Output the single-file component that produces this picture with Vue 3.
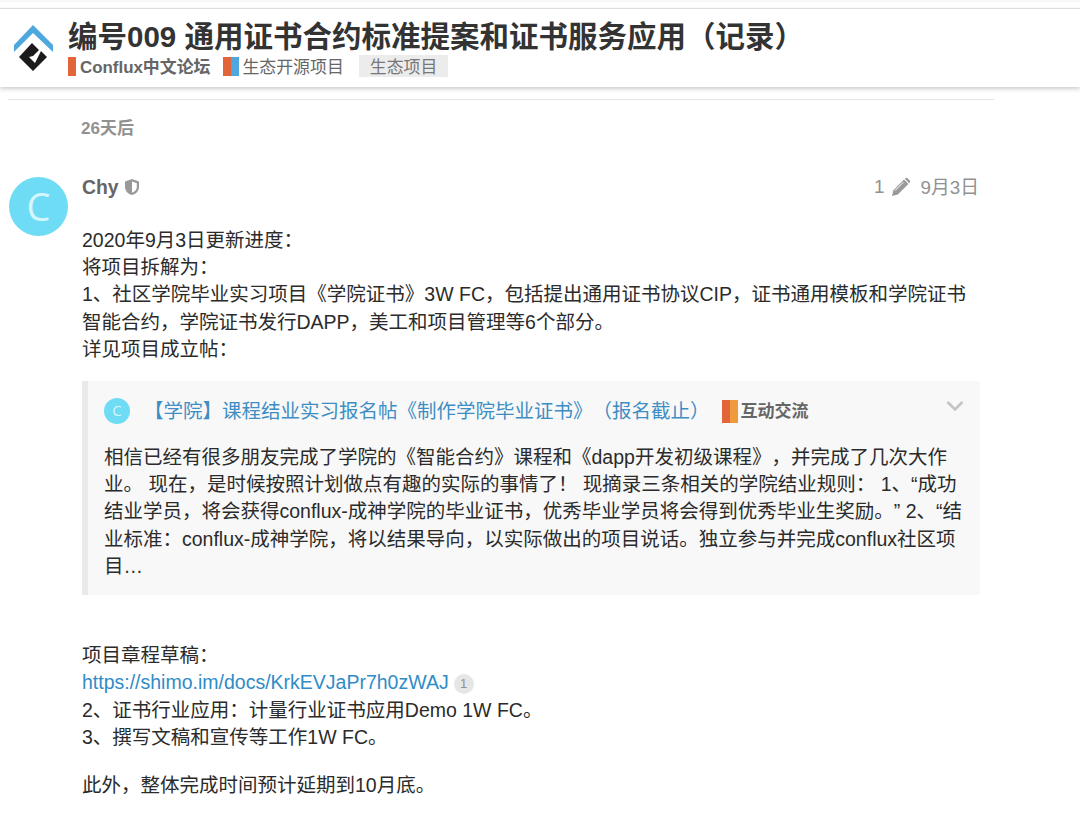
<script setup>
const quoteLines = [
  '相信已经有很多朋友完成了学院的《智能合约》课程和《dapp开发初级课程》，并完成了几次大作',
  '业。 现在，是时候按照计划做点有趣的实际的事情了！ 现摘录三条相关的学院结业规则： 1、“成功',
  '结业学员，将会获得conflux-成神学院的毕业证书，优秀毕业学员将会得到优秀毕业生奖励。” 2、“结',
  '业标准：conflux-成神学院，将以结果导向，以实际做出的项目说话。独立参与并完成conflux社区项',
  '目…',
]
</script>

<template>
  <div class="page">
    <div class="top-strip"></div>
    <header class="topic-header">
      <svg class="logo" viewBox="0 0 40 50" width="40" height="50">
        <path d="M19 0 L39 20 V27 L19 8 L0 27 V20 Z" fill="#4ea8de" />
        <path d="M18 18 L25 25 L19 31 L15 32 L21 38 L27 26 L33 32 L19 46 L5 32 Z" fill="#1c1a1a" />
      </svg>
      <div class="title-block">
        <h1>编号009 通用证书合约标准提案和证书服务应用（记录）</h1>
        <div class="crumbs">
          <span class="cat first"><i class="bar orange"></i><span class="label">Conflux中文论坛</span></span>
          <span class="cat second"><i class="bar orange"></i><i class="bar blue"></i><span class="label">生态开源项目</span></span>
          <span class="tag">生态项目</span>
        </div>
      </div>
    </header>

    <div class="rule"></div>
    <div class="gap-note">26天后</div>

    <article class="post">
      <div class="avatar">C</div>
      <div class="post-body">
        <div class="post-meta">
          <span class="username">Chy</span>
          <svg class="shield" viewBox="0 0 16 18" width="16" height="18">
            <path d="M8 1 L15 3.5 V9 C15 13 12 16 8 17 C4 16 1 13 1 9 V3.5 Z" fill="#999" />
            <path d="M8 3.5 L12.8 5.2 V9 C12.8 11.6 11 13.8 8 14.8 Z" fill="#fff" />
          </svg>
          <span class="spacer"></span>
          <span class="edits">1</span>
          <svg class="pencil" viewBox="0 0 20 20" width="20" height="20">
            <path d="M1 19 L2.4 13.2 L13 2.6 L17.4 7 L6.8 17.6 Z" fill="#999" />
            <path d="M14.2 1.4 C15 .6 16 .6 16.8 1.4 L18.6 3.2 C19.4 4 19.4 5 18.6 5.8 L18.2 6.2 L13.8 1.8 Z" fill="#999" />
            <path d="M4 13.6 L12.4 5.2" stroke="#fff" stroke-width="1" />
          </svg>
          <span class="post-date">9月3日</span>
        </div>

        <div class="cooked">
          <p>
            2020年9月3日更新进度：<br />
            将项目拆解为：<br />
            1、社区学院毕业实习项目《学院证书》3W FC，包括提出通用证书协议CIP，证书通用模板和学院证书<br />
            智能合约，学院证书发行DAPP，美工和项目管理等6个部分。<br />
            详见项目成立帖：
          </p>

          <aside class="quote">
            <div class="quote-title">
              <span class="mini-avatar">C</span>
              <a class="quote-link">【学院】课程结业实习报名帖《制作学院毕业证书》（报名截止）</a>
              <span class="cat small"><i class="bar orange"></i><i class="bar amber"></i><span class="label">互动交流</span></span>
              <svg class="chevron" viewBox="0 0 18 12" width="18" height="12">
                <path d="M1.5 2 L9 9.5 L16.5 2" fill="none" stroke="#c4c4c4" stroke-width="2.6" />
              </svg>
            </div>
            <blockquote>
              <div v-for="line in quoteLines" :key="line">{{ line }}</div>
            </blockquote>
          </aside>

          <p class="after-quote">
            项目章程草稿：<br />
            <a class="link">https://shimo.im/docs/KrkEVJaPr7h0zWAJ</a><span class="clicks">1</span><br />
            2、证书行业应用：计量行业证书应用Demo 1W FC。<br />
            3、撰写文稿和宣传等工作1W FC。
          </p>
          <p class="last">此外，整体完成时间预计延期到10月底。</p>
        </div>
      </div>
    </article>
  </div>
</template>

<style>
html, body {
  margin: 0;
  background: #fff;
}
</style>

<style scoped>
.page {
  width: 1080px;
  height: 825px;
  overflow: hidden;
  font-family: "Liberation Sans", "Noto Sans CJK SC", sans-serif;
  color: #2b2b2b;
  text-spacing-trim: space-all;
}

.top-strip {
  height: 2px;
  margin-bottom: 6px;
  background: #f6f6f6;
}
.topic-header {
  height: 79px;
  box-sizing: border-box;
  display: flex;
  align-items: flex-start;
  padding: 16px 0 0 14px;
  border-top: 1px solid #ddd;
  box-shadow: 0 2px 4px rgba(0, 0, 0, .2);
}
.logo {
  flex: none;
}
.title-block {
  margin-left: 14px;
}
h1 {
  margin: -6px 0 0;
  font-size: 29.5px;
  line-height: 36px;
  font-weight: 700;
  color: #333;
  white-space: nowrap;
}
.crumbs {
  display: flex;
  align-items: center;
  height: 22px;
  font-size: 16.9px;
  color: #666;
}
.cat {
  display: inline-flex;
  align-items: center;
  white-space: nowrap;
}
.label {
  margin-top: -2px;
}
.first {
  font-weight: 700;
  margin-right: 13px;
}
.second {
  margin-right: 15px;
}
.bar {
  display: inline-block;
  flex: none;
  width: 8px;
  height: 19px;
}
.first .bar {
  margin-right: 4px;
}
.bar + .bar {
  margin-right: 3px;
}
.orange { background: #e2653a; }
.blue { background: #4ea8de; }
.amber { background: #f09a3e; }
.tag {
  background: #ececec;
  color: #777;
  padding: 0 11px;
  height: 22px;
  line-height: 26px;
}

.rule {
  height: 1px;
  background: #e6e6e6;
  margin: 12px 86px 0 8px;
}
.gap-note {
  margin: 20px 0 0 81px;
  font-size: 17px;
  line-height: 18px;
  font-weight: 700;
  color: #919191;
}

.post {
  display: flex;
  margin-top: 35px;
  padding-left: 9px;
}
.avatar {
  flex: none;
  width: 59px;
  height: 59px;
  margin-top: 4px;
  border-radius: 50%;
  background: #6fdcf5;
  color: #d6f6fd;
  font-size: 38px;
  line-height: 59px;
  text-align: center;
  font-family: "Open Sans", sans-serif;
}
.post-body {
  width: 898px;
  margin-left: 14px;
}
.post-meta {
  display: flex;
  align-items: center;
  height: 28px;
  color: #919191;
  font-size: 18.8px;
}
.username {
  font-weight: 700;
  font-size: 19.4px;
  color: #666;
}
.shield {
  margin-left: 5px;
}
.spacer {
  flex: 1;
}
.pencil {
  margin: 0 10px 0 6px;
}
.post-date {
  margin: -4px 1px 0 0;
}

.cooked {
  margin-top: 25.5px;
  font-size: 19.5px;
  line-height: 27.4px;
}
.cooked p {
  margin: 0;
  white-space: nowrap;
}
.quote {
  margin-top: 17.5px;
  height: 214px;
  box-sizing: border-box;
  background: #f8f8f8;
  border-left: 6px solid #e9e9e9;
  padding: 0 16px;
}
.quote-title {
  display: flex;
  align-items: center;
  height: 60px;
  position: relative;
}
.mini-avatar {
  flex: none;
  width: 26px;
  height: 26px;
  border-radius: 50%;
  background: #6fdcf5;
  color: #d6f6fd;
  font-size: 15px;
  line-height: 24px;
  text-align: center;
  font-family: "Open Sans", sans-serif;
}
.quote-link {
  margin: 2px 0 0 14px;
  color: #3d8ec4;
  white-space: nowrap;
}
.cat.small {
  margin-left: 12px;
  font-size: 17px;
  color: #666;
  font-weight: 700;
}
.cat.small .bar {
  height: 23px;
}
.cat.small .label {
  margin-top: 2px;
}
.chevron {
  position: absolute;
  right: 0;
  top: 19px;
}
blockquote {
  margin: 0;
  padding-top: 2.5px;
  white-space: nowrap;
}
.after-quote {
  margin-top: 47px !important;
}
.link {
  color: #2f8cc7;
}
.clicks {
  display: inline-block;
  width: 20px;
  height: 20px;
  margin-left: 5px;
  border-radius: 50%;
  background: #e6e6e6;
  color: #919191;
  font-size: 13px;
  line-height: 20px;
  text-align: center;
  vertical-align: 1px;
}
.last {
  margin-top: 20px !important;
}
</style>
